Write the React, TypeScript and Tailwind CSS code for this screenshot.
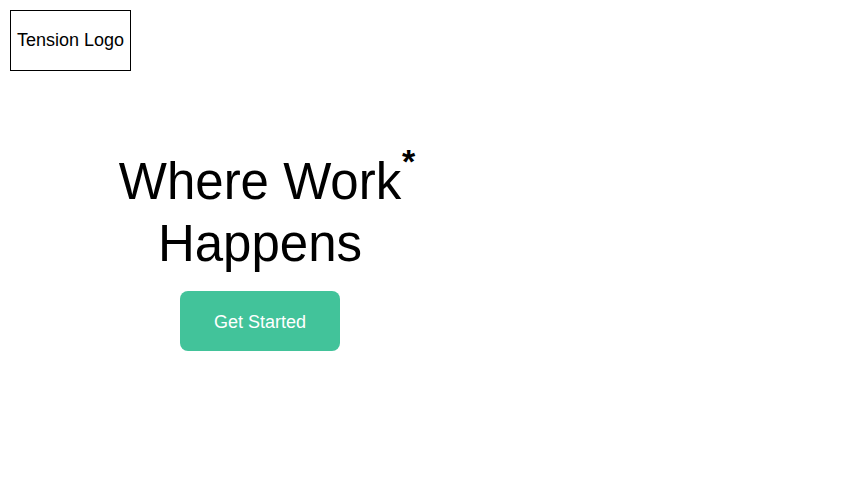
import React from 'react';

const App: React.FC = () => {
  return (
    <div className="min-h-screen w-full bg-white text-black font-['Liberation_Sans',Arial,sans-serif]">
      <header className="pl-[10px] pt-[10px]">
        <div className="flex h-[61px] w-[121px] items-center justify-center border border-black text-[18px]">
          Tension Logo
        </div>
      </header>

      <main className="mt-[80px] flex w-[520px] flex-col items-center text-center">
        <h1 className="text-[51px] font-normal leading-[62px]">
          <span className="relative">
            Where Work
            <span className="absolute -right-[14px] -top-[23px] text-[34px] font-bold">*</span>
          </span>
          <br />
          Happens
        </h1>
        <button className="mt-[16px] h-[60px] w-[160px] rounded-[8px] bg-[#42c39a] pt-[2px] text-[18px] text-white">
          Get Started
        </button>
      </main>
    </div>
  );
};

export default App;
